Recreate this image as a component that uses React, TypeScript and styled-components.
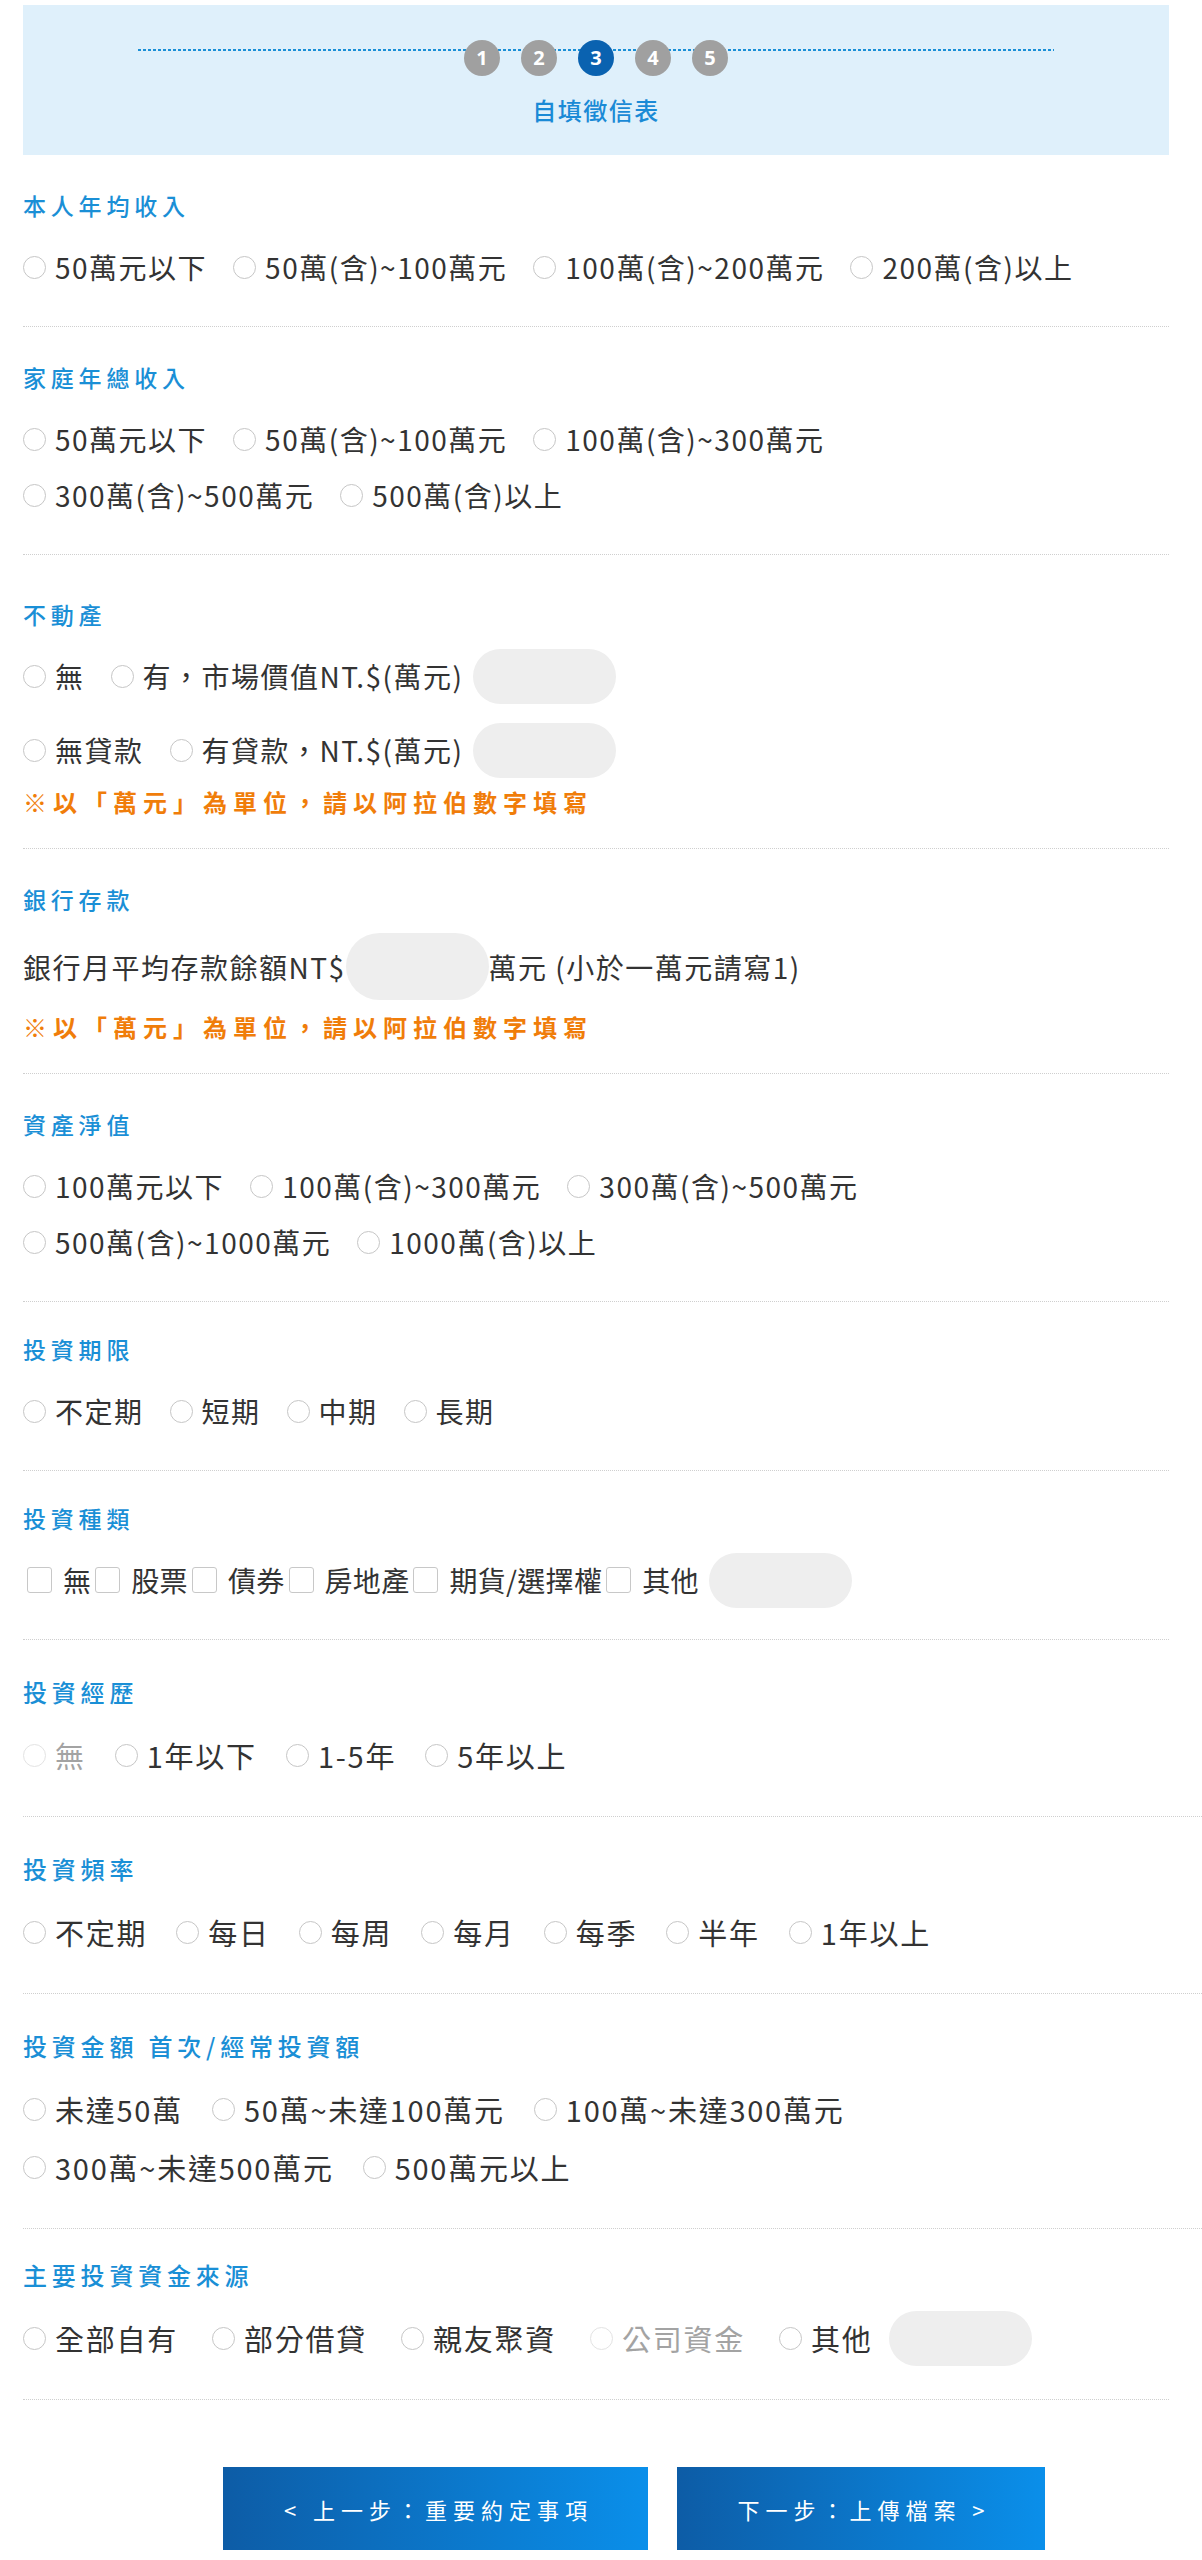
import styled, { createGlobalStyle } from 'styled-components';

const GlobalStyle = createGlobalStyle`
  * { box-sizing: border-box; }
  body {
    margin: 0;
    background: #fff;
    color: #333;
    font-family: "Noto Sans CJK TC", "Noto Sans", sans-serif;
  }
`;

const Page = styled.div`
  padding: 5px 33px 13px 23px;
`;

const StepHeader = styled.header`
  background: #dff0fb;
  padding: 35px 0 30px;
  display: flex;
  flex-direction: column;
  align-items: center;
`;

const StepTrack = styled.div`
  width: 80%;
  display: flex;
  justify-content: center;
  gap: 21px;
  background-image: repeating-linear-gradient(90deg, #1a8fd6 0 3px, transparent 3px 5px);
  background-size: 100% 2px;
  background-repeat: no-repeat;
  background-position: 0 9px;
`;

const StepDot = styled.span<{ $active?: boolean }>`
  width: 36px;
  height: 36px;
  border-radius: 50%;
  background: ${(p) => (p.$active ? '#0a62b0' : '#a0a0a0')};
  color: #fff;
  font: 700 20px/36px "Noto Sans", sans-serif;
  text-align: center;
`;

const StepLabel = styled.div`
  margin-top: 19px;
  font-size: 24px;
  line-height: 30px;
  font-weight: 500;
  letter-spacing: 1.5px;
  color: #1a8ad6;
`;

// $large: the lower blocks of the form render a little bigger than the upper ones
const Section = styled.section<{ $bleed?: boolean; $large?: boolean; $top?: number }>`
  padding: ${(p) => p.$top ?? (p.$large ? 31 : 30)}px 0 ${(p) => (p.$large ? 32 : 31)}px;
  border-bottom: 1px dotted #cfcfcf;
  margin-right: ${(p) => (p.$bleed ? '-33px' : '0')};
  --title-size: ${(p) => (p.$large ? 24 : 23)}px;
  --title-lh: ${(p) => (p.$large ? 41 : 40)}px;
  --row-size: ${(p) => (p.$large ? 29 : 28)}px;
  --row-ls: ${(p) => (p.$large ? 1.75 : 1.5)}px;
  --row-h: ${(p) => (p.$large ? 58 : 56)}px;
`;

const Title = styled.h3`
  margin: 0 0 14px;
  font-size: var(--title-size);
  line-height: var(--title-lh);
  font-weight: 500;
  letter-spacing: 4.8px;
  color: #1a8fd6;
`;

const Rows = styled.div<{ $gap?: number }>`
  display: flex;
  flex-direction: column;
  gap: ${(p) => p.$gap ?? 0}px;
`;

const Row = styled.div<{ $optGap?: number; $tight?: boolean }>`
  display: flex;
  flex-wrap: wrap;
  align-items: center;
  min-height: var(--row-h);
  font-size: var(--row-size);
  letter-spacing: ${(p) => (p.$tight ? '0.3px' : 'var(--row-ls)')};
  --opt-gap: ${(p) => p.$optGap ?? 26}px;
`;

const Option = styled.label<{ $disabled?: boolean }>`
  display: inline-flex;
  align-items: center;
  gap: 9px;
  margin-right: var(--opt-gap);
  color: ${(p) => (p.$disabled ? '#a3a3a3' : '#333')};
  white-space: nowrap;
`;

const RadioMark = styled.span<{ $disabled?: boolean }>`
  width: 23px;
  height: 23px;
  border-radius: 50%;
  border: 1.5px solid ${(p) => (p.$disabled ? '#e3e3e3' : '#c6c6c6')};
  background: #fff;
  flex-shrink: 0;
`;

const CheckOption = styled.label`
  display: inline-flex;
  align-items: center;
  gap: 11px;
  margin-left: 4px;
  white-space: nowrap;
`;

const CheckMark = styled.span`
  width: 25px;
  height: 26px;
  border-radius: 3px;
  border: 1.5px solid #c8c8c8;
  background: #fff;
  flex-shrink: 0;
`;

const Pill = styled.span<{ $tall?: boolean; $gapLeft?: number }>`
  display: inline-block;
  width: 143px;
  height: ${(p) => (p.$tall ? 67 : 55)}px;
  border-radius: 34px;
  background: #eeeeee;
  margin-left: ${(p) => p.$gapLeft ?? 0}px;
`;

const Note = styled.p<{ $top?: number }>`
  margin: ${(p) => p.$top ?? 12}px 0 0;
  font-size: 24px;
  line-height: 30px;
  font-weight: 700;
  letter-spacing: 6px;
  color: #f07d0a;
`;

const ButtonBar = styled.div`
  display: flex;
  gap: 29px;
  padding: 67px 0 0 200px;
`;

const NavButton = styled.button<{ $width: number }>`
  width: ${(p) => p.$width}px;
  height: 83px;
  padding: 0 0 0 6px;
  border: none;
  background: linear-gradient(90deg, #0d5ca6, #0a8fea);
  color: #fff;
  font-family: "Noto Sans CJK TC", sans-serif;
  font-size: 22px;
  letter-spacing: 6px;
  text-align: center;
`;

type Opt = string | { label: string; disabled?: boolean };

function Radio({ opt }: { opt: Opt }) {
  const label = typeof opt === 'string' ? opt : opt.label;
  const disabled = typeof opt === 'string' ? false : !!opt.disabled;
  return (
    <Option $disabled={disabled}>
      <RadioMark $disabled={disabled} />
      {label}
    </Option>
  );
}

function RadioRows({ rows, optGap }: { rows: Opt[][]; optGap?: number }) {
  return (
    <Rows>
      {rows.map((r, i) => (
        <Row key={i} $optGap={optGap}>
          {r.map((o, j) => (
            <Radio key={j} opt={o} />
          ))}
        </Row>
      ))}
    </Rows>
  );
}

const investTypes = ['無', '股票', '債券', '房地產', '期貨/選擇權', '其他'];

export default function App() {
  return (
    <>
      <GlobalStyle />
      <Page lang="zh-TW">
        <StepHeader>
          <StepTrack>
            {[1, 2, 3, 4, 5].map((n) => (
              <StepDot key={n} $active={n === 3}>
                {n}
              </StepDot>
            ))}
          </StepTrack>
          <StepLabel>自填徵信表</StepLabel>
        </StepHeader>

        <Section>
          <Title>本人年均收入</Title>
          <RadioRows rows={[['50萬元以下', '50萬(含)~100萬元', '100萬(含)~200萬元', '200萬(含)以上']]} />
        </Section>

        <Section>
          <Title>家庭年總收入</Title>
          <RadioRows
            rows={[
              ['50萬元以下', '50萬(含)~100萬元', '100萬(含)~300萬元'],
              ['300萬(含)~500萬元', '500萬(含)以上'],
            ]}
          />
        </Section>

        <Section $top={39}>
          <Title>不動產</Title>
          <Rows $gap={18}>
            <Row>
              <Radio opt="無" />
              <Radio opt="有，市場價值NT.$(萬元)" />
              <Pill $gapLeft={-16} />
            </Row>
            <Row>
              <Radio opt="無貸款" />
              <Radio opt="有貸款，NT.$(萬元)" />
              <Pill $gapLeft={-16} />
            </Row>
          </Rows>
          <Note $top={9}>※以「萬元」為單位，請以阿拉伯數字填寫</Note>
        </Section>

        <Section>
          <Title>銀行存款</Title>
          <Row>
            銀行月平均存款餘額NT$
            <Pill $tall />
            萬元 (小於一萬元請寫1)
          </Row>
          <Note>※以「萬元」為單位，請以阿拉伯數字填寫</Note>
        </Section>

        <Section>
          <Title>資產淨值</Title>
          <RadioRows
            rows={[
              ['100萬元以下', '100萬(含)~300萬元', '300萬(含)~500萬元'],
              ['500萬(含)~1000萬元', '1000萬(含)以上'],
            ]}
          />
        </Section>

        <Section $top={27}>
          <Title>投資期限</Title>
          <RadioRows rows={[['不定期', '短期', '中期', '長期']]} />
        </Section>

        <Section $top={27}>
          <Title>投資種類</Title>
          <Row $tight>
            {investTypes.map((t) => (
              <CheckOption key={t}>
                <CheckMark />
                {t}
              </CheckOption>
            ))}
            <Pill $gapLeft={10} />
          </Row>
        </Section>

        <Section $bleed $large>
          <Title>投資經歷</Title>
          <RadioRows optGap={29} rows={[[{ label: '無', disabled: true }, '1年以下', '1-5年', '5年以上']]} />
        </Section>

        <Section $bleed $large>
          <Title>投資頻率</Title>
          <RadioRows optGap={29} rows={[['不定期', '每日', '每周', '每月', '每季', '半年', '1年以上']]} />
        </Section>

        <Section $bleed $large>
          <Title>投資金額 首次/經常投資額</Title>
          <RadioRows
            optGap={29}
            rows={[
              ['未達50萬', '50萬~未達100萬元', '100萬~未達300萬元'],
              ['300萬~未達500萬元', '500萬元以上'],
            ]}
          />
        </Section>

        <Section $large $top={25}>
          <Title>主要投資資金來源</Title>
          <Row $optGap={34}>
            {['全部自有', '部分借貸', '親友聚資'].map((o) => (
              <Radio key={o} opt={o} />
            ))}
            <Radio opt={{ label: '公司資金', disabled: true }} />
            <Radio opt="其他" />
            <Pill $gapLeft={-18} />
          </Row>
        </Section>

        <ButtonBar>
          <NavButton $width={425}>&lt; 上一步：重要約定事項</NavButton>
          <NavButton $width={368}>下一步：上傳檔案 &gt;</NavButton>
        </ButtonBar>
      </Page>
    </>
  );
}
